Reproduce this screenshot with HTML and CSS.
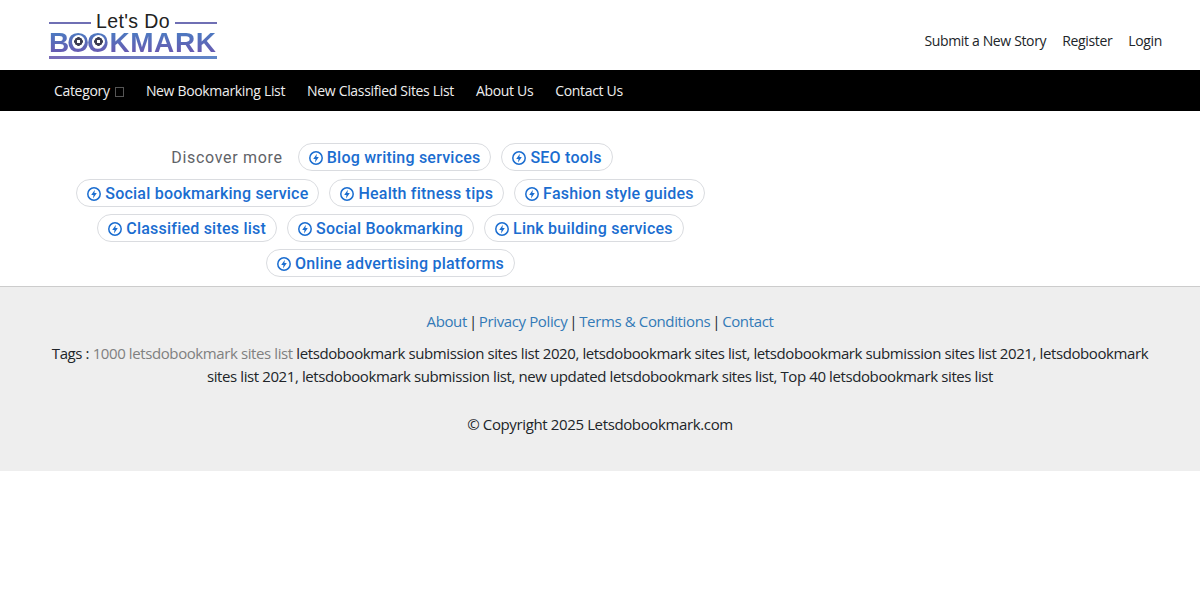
FILE: index.html
```html
<!DOCTYPE html>
<html lang="en">
<head>
  <meta charset="UTF-8">
  <title>Let's Do Bookmark</title>
  <link rel="stylesheet" href="styles.css">
</head>
<body>
  <header class="top">
    <a class="logo" href="#">
      <span class="logo-line1"><i></i><b>Let's Do</b><i></i></span>
      <span class="logo-word"><span class="tight">BO</span>OKMAR<span class="last">K</span></span>
      <span class="logo-rule"></span>
    </a>
    <nav class="user-links">
      <a href="#">Submit a New Story</a>
      <a href="#">Register</a>
      <a href="#">Login</a>
    </nav>
  </header>

  <nav class="menu">
    <a href="#">Category <span class="box"></span></a>
    <a href="#">New Bookmarking List</a>
    <a href="#">New Classified Sites List</a>
    <a href="#">About Us</a>
    <a href="#">Contact Us</a>
  </nav>

  <section class="discover">
    <div class="chips">
      <span class="label">Discover more</span>
      <a class="chip" href="#"><svg viewBox="0 0 16 16"><circle cx="8" cy="8" r="6.2"/><path d="M8.9 3.7 5.2 8.9h2.3l-.5 3.5 3.8-5.3H8.4z"/></svg>Blog writing services</a>
      <a class="chip" href="#"><svg viewBox="0 0 16 16"><circle cx="8" cy="8" r="6.2"/><path d="M8.9 3.7 5.2 8.9h2.3l-.5 3.5 3.8-5.3H8.4z"/></svg>SEO tools</a>
      <a class="chip" href="#"><svg viewBox="0 0 16 16"><circle cx="8" cy="8" r="6.2"/><path d="M8.9 3.7 5.2 8.9h2.3l-.5 3.5 3.8-5.3H8.4z"/></svg>Social bookmarking service</a>
      <a class="chip" href="#"><svg viewBox="0 0 16 16"><circle cx="8" cy="8" r="6.2"/><path d="M8.9 3.7 5.2 8.9h2.3l-.5 3.5 3.8-5.3H8.4z"/></svg>Health fitness tips</a>
      <a class="chip" href="#"><svg viewBox="0 0 16 16"><circle cx="8" cy="8" r="6.2"/><path d="M8.9 3.7 5.2 8.9h2.3l-.5 3.5 3.8-5.3H8.4z"/></svg>Fashion style guides</a>
      <a class="chip" href="#"><svg viewBox="0 0 16 16"><circle cx="8" cy="8" r="6.2"/><path d="M8.9 3.7 5.2 8.9h2.3l-.5 3.5 3.8-5.3H8.4z"/></svg>Classified sites list</a>
      <a class="chip" href="#"><svg viewBox="0 0 16 16"><circle cx="8" cy="8" r="6.2"/><path d="M8.9 3.7 5.2 8.9h2.3l-.5 3.5 3.8-5.3H8.4z"/></svg>Social Bookmarking</a>
      <a class="chip" href="#"><svg viewBox="0 0 16 16"><circle cx="8" cy="8" r="6.2"/><path d="M8.9 3.7 5.2 8.9h2.3l-.5 3.5 3.8-5.3H8.4z"/></svg>Link building services</a>
      <a class="chip" href="#"><svg viewBox="0 0 16 16"><circle cx="8" cy="8" r="6.2"/><path d="M8.9 3.7 5.2 8.9h2.3l-.5 3.5 3.8-5.3H8.4z"/></svg>Online advertising platforms</a>
    </div>
  </section>

  <footer class="footer">
    <p class="foot-links"><a href="#">About</a><span class="sep">|</span><a href="#">Privacy Policy</a><span class="sep">|</span><a href="#">Terms &amp; Conditions</a><span class="sep">|</span><a href="#">Contact</a></p>
    <p class="tags">Tags : <span class="grey">1000 letsdobookmark sites list</span> letsdobookmark submission sites list 2020, letsdobookmark sites list, letsdobookmark submission sites list 2021, letsdobookmark sites list 2021, letsdobookmark submission list, new updated letsdobookmark sites list, Top 40 letsdobookmark sites list</p>
    <p class="copy">© Copyright 2025 Letsdobookmark.com</p>
  </footer>
</body>
</html>
```

FILE: styles.css
```css
body {
  margin: 0;
  background: #fff;
  color: #212529;
  font-family: "Open Sans", "Noto Sans", sans-serif;
  font-size: 15px;
}
a {
  text-decoration: none;
}
.top {
  height: 70px;
  display: flex;
  justify-content: space-between;
  padding: 0 38px 0 49px;
}
.logo {
  width: 168px;
  padding-top: 12px;
  display: block;
}
.logo-line1 {
  display: flex;
  align-items: center;
  gap: 5px;
  height: 19px;
}
.logo-line1 i {
  flex: 1;
  height: 2px;
  margin-top: 2px;
  background: #6f6fb4;
}
.logo-line1 b {
  font: 400 19.5px/19px "Liberation Sans", sans-serif;
  letter-spacing: .4px;
  color: #222;
}
.logo-word {
  position: relative;
  display: block;
  font: 700 28px/23px "Liberation Sans", sans-serif;
  letter-spacing: .6px;
  white-space: nowrap;
  background: linear-gradient(#4a7cc2, #6a58b0);
  -webkit-background-clip: text;
  background-clip: text;
  color: transparent;
}
.tight {
  letter-spacing: -2px;
}
.last {
  letter-spacing: 0;
}
/* pupils of the two O's */
.logo-word::before,
.logo-word::after {
  content: "";
  position: absolute;
  top: 4px;
  width: 13px;
  height: 13px;
  border-radius: 50%;
  background: radial-gradient(circle, #fff 0 1.6px, #3c3c50 2px 4px, #fff 4.5px);
}
.logo-word::before {
  left: 22.5px;
}
.logo-word::after {
  left: 42.5px;
}
.logo-rule {
  display: block;
  height: 3px;
  margin-top: 2px;
  background: linear-gradient(90deg, #7a6cb8, #5f86c8);
}
.user-links {
  display: flex;
  gap: 16px;
  padding-top: 31px;
  padding-right: 0;
  font-size: 14px;
  letter-spacing: -.35px;
}
.user-links a {
  color: #212529;
}
.menu {
  height: 41px;
  background: #000;
  display: flex;
  align-items: center;
  gap: 22px;
  padding-left: 54px;
  font-size: 14px;
  letter-spacing: -.33px;
}
.menu a {
  color: #eee;
}
.box {
  display: inline-block;
  box-sizing: border-box;
  width: 9px;
  height: 10px;
  margin-left: 2px;
  border: 1px solid #555;
  vertical-align: -1px;
}
.discover {
  width: 781px;
  padding: 32px 0 9px;
}
.chips {
  display: flex;
  flex-wrap: wrap;
  justify-content: center;
  align-items: flex-start;
  gap: 7px 10px;
  padding: 0 60px;
}
.label {
  font: 400 16px/29px Roboto, sans-serif;
  letter-spacing: .7px;
  color: #5f6368;
  margin: 0 5px 0 3px;
}
.chip {
  height: 28px;
  box-sizing: border-box;
  display: flex;
  align-items: center;
  gap: 3px;
  padding: 0 10px 0 9px;
  border: 1px solid #dadce0;
  border-radius: 14px;
  font: 500 16px Roboto, sans-serif;
  letter-spacing: .22px;
  color: #1a6dd0;
  white-space: nowrap;
}
.chip svg {
  width: 16px;
  height: 16px;
  margin-top: 1px;
}
.chip circle {
  fill: none;
  stroke: #1a6dd0;
  stroke-width: 1.5;
}
.chip path {
  fill: #1a6dd0;
}
.footer {
  background: #eee;
  border-top: 1px solid #ccc;
  height: 185px;
  box-sizing: border-box;
  padding: 23px 40px 0;
  text-align: center;
  line-height: 23px;
  font-size: 15px;
  letter-spacing: -.37px;
}
.footer p {
  margin: 0;
}
.footer .foot-links {
  margin-bottom: 9px;
}
.foot-links a {
  color: #337ab7;
}
.sep {
  margin: 0 2px;
}
.footer .tags {
  letter-spacing: -.4px;
}
.grey {
  color: #808080;
}
.footer .copy {
  margin-top: 25px;
}
```
